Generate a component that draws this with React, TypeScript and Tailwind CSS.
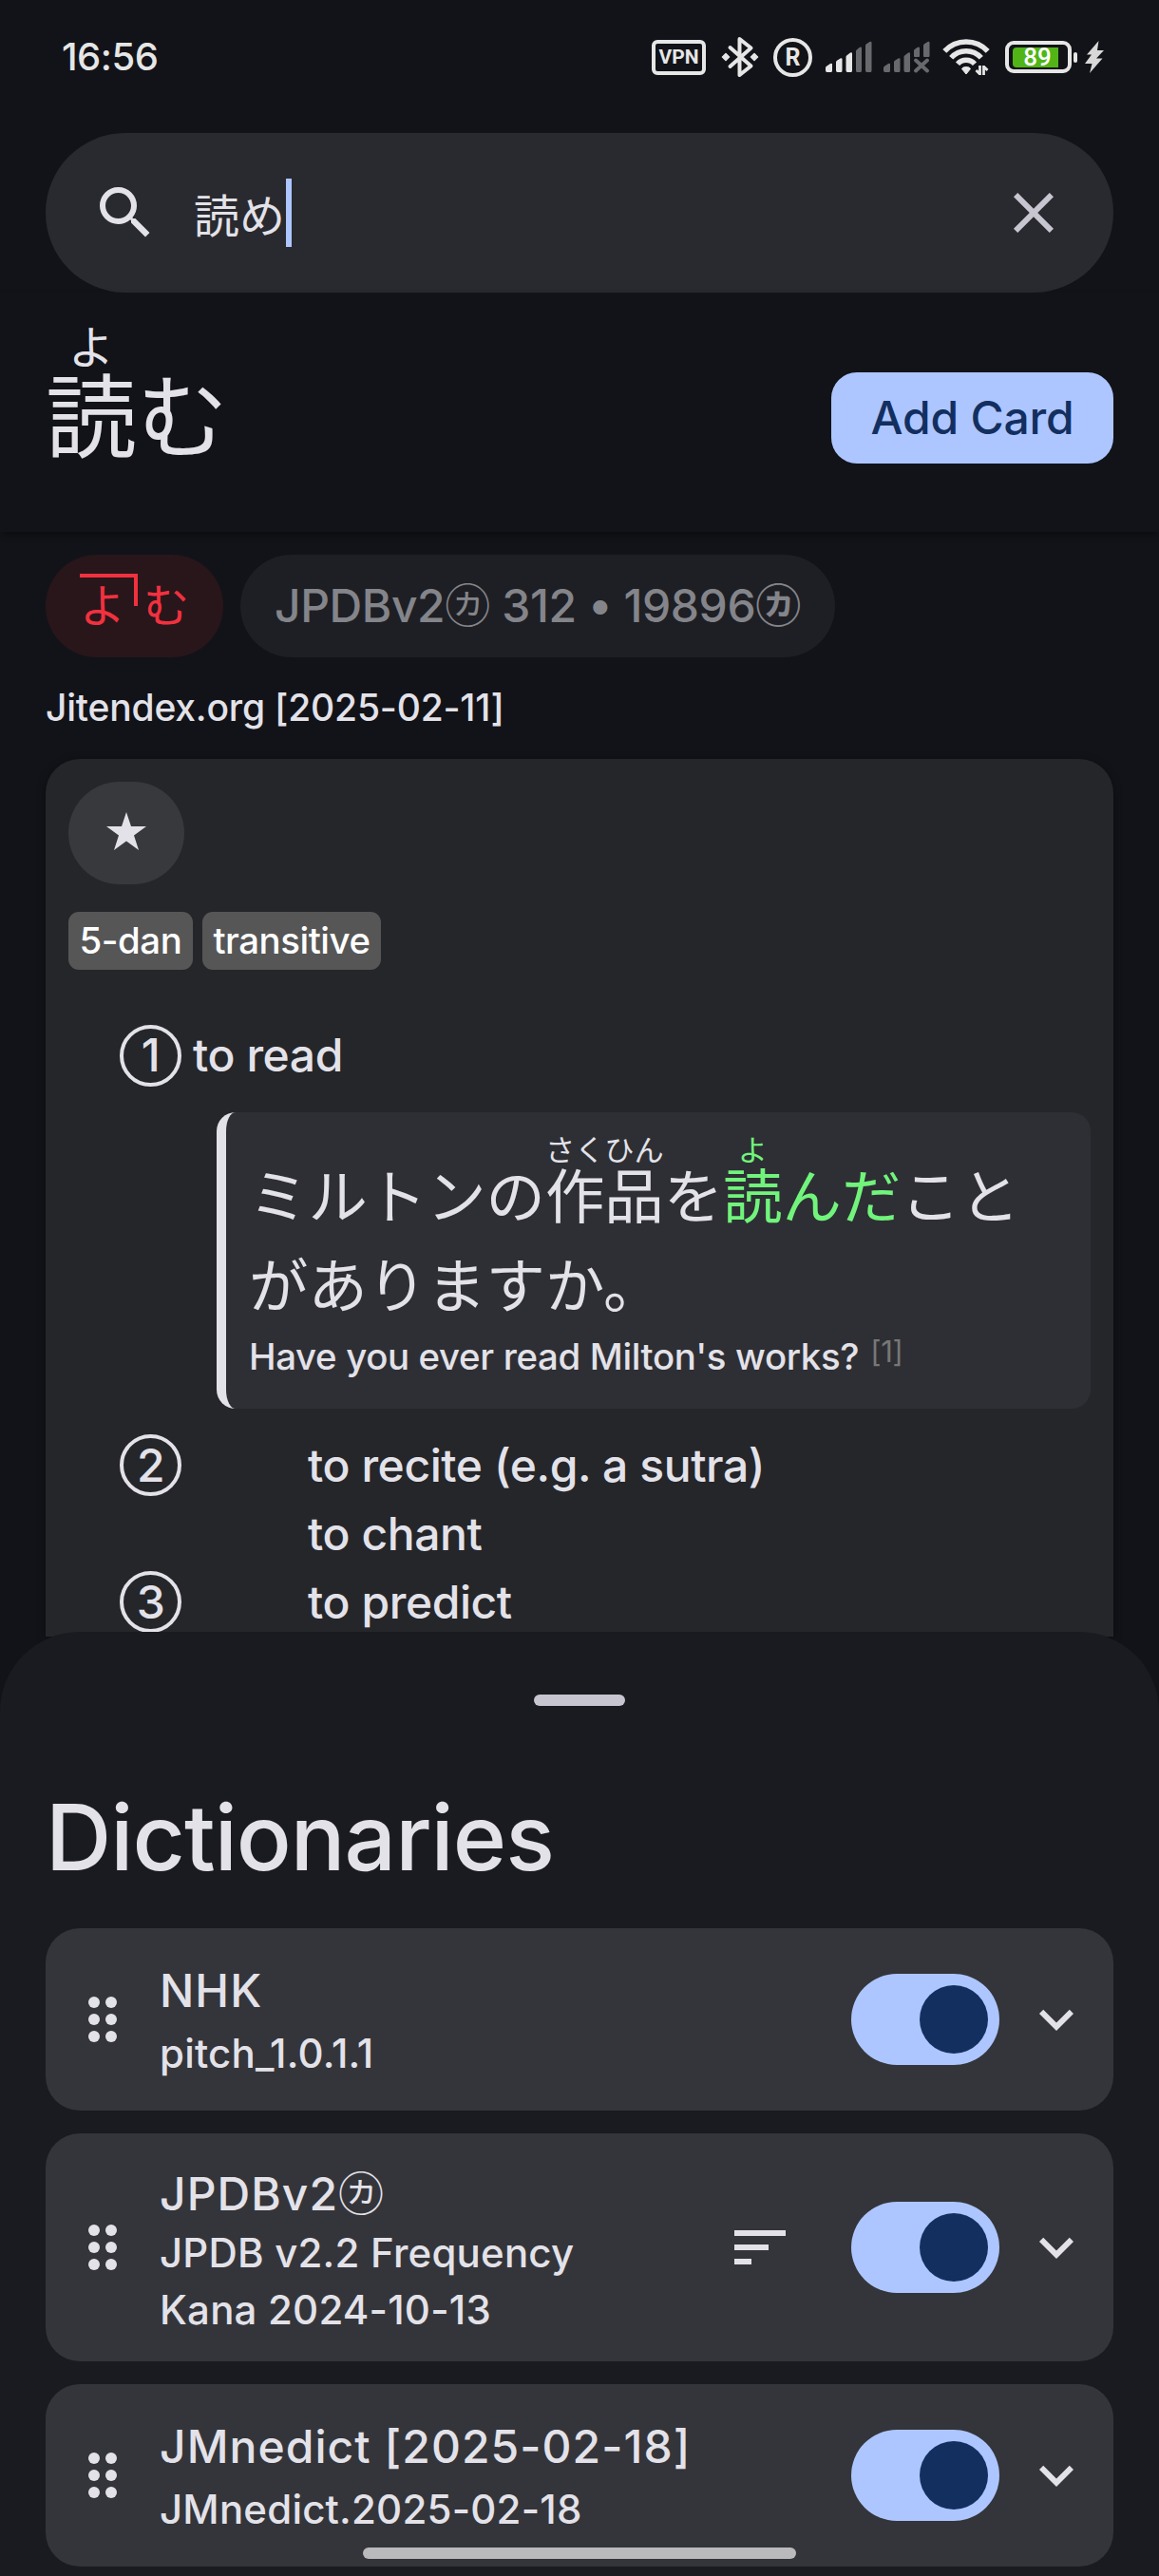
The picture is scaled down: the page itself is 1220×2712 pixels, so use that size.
import React from "react";

const FONT = "font-['Inter','Noto_Sans_CJK_JP',sans-serif]";

function Signal({ dim, crossed }: { dim?: boolean; crossed?: boolean }) {
  const lit = dim ? "#68696c" : "#e6e6e6";
  return (
    <svg width="49" height="34" viewBox="0 0 49 34" className="block">
      <path d="M0 31v-2.500q0-1 1-1.700l4-2.800q2-1 2 1V31q0 2-1 2H1.500Q0 33 0 31z" fill={lit} />
      <path d="M11 31V22.500q0-1 1-1.700l3.500-2.300q2-1 2 1V31q0 2-1 2h-4Q11 33 11 31z" fill={lit} />
      <path d="M21.500 31V17q0-1 1-1.700l3.500-2.800q2-1 2 1V31q0 2-1 2h-4q-1.500 0-1.500-2z" fill={lit} />
      {crossed ? (
        <>
          <path d="M32 16v-5.500q0-1 1-1.700l3-2q2-1 2 1V16q0 1-1 1h-4q-1 0-1-1zM42 16V5q0-1 1-1.700l3.500-2.300q2-1 2 1V16q0 1-1 1H43q-1 0-1-1z" fill="#68696c" />
          <path d="M34 20.500l12 11M46 20.500l-12 11" stroke="#68696c" strokeWidth="3.800" strokeLinecap="round" />
        </>
      ) : (
        <path d="M32 31V11q0-1 1-1.700l3-2.500q2-1 2 1V31q0 2-1 2h-4q-1 0-1-2zM42 31V5q0-1 1-1.700l3.500-2.300q2-1 2 1V31q0 2-1 2h-4q-1.500 0-1.500-2z" fill="#68696c" />
      )}
    </svg>
  );
}

function StatusBar() {
  return (
    <div className="flex h-[120px] shrink-0 items-center pl-[65px] pr-[58px] text-[#e6e6e6]">
      <div className="flex-1 text-[40px] font-medium leading-[48px] tracking-[-0.5px]">16:56</div>
      <div className="flex items-center font-['Roboto',sans-serif]">
        <div className="flex h-[37px] w-[57px] items-center justify-center rounded-[6px] border-[4.500px] border-[#e6e6e6] text-[21px] font-bold leading-none">
          VPN
        </div>
        <svg width="40" height="44" viewBox="0 0 40 44" className="ml-4" fill="none" stroke="#e6e6e6" strokeWidth="4" strokeLinejoin="round" strokeLinecap="round">
          <path d="M9.500 12l22 19.500L19.500 41V3l12 9.500L9.500 32" />
          <path d="M5 18.500l3.500 3.500L5 25.500 1.500 22zM35 18.500l3.500 3.500-3.500 3.500-3.500-3.500z" fill="#e6e6e6" strokeWidth="1.500" />
        </svg>
        <div className="ml-[15px] flex h-[41px] w-[41px] items-center justify-center rounded-full border-4 border-[#e6e6e6] text-[25px] font-bold leading-none">
          R
        </div>
        <div className="ml-[14px]"><Signal /></div>
        <div className="ml-3"><Signal dim crossed /></div>
        <svg width="50" height="42" viewBox="0 0 50 42" className="ml-[13px]" fill="none" stroke="#e6e6e6" strokeWidth="5.500">
          <path d="M2.300 14.800a31 31 0 0 1 45.400 0" />
          <path d="M9.200 21.800a21 21 0 0 1 31.600 0" />
          <path d="M16 28.300a12 12 0 0 1 18 0" />
          <path d="M25 31.500q4 0 4.500 2L25 39l-4.500-5.500q.5-2 4.500-2z" strokeWidth="1" fill="#e6e6e6" />
          <path d="M39.500 30v10M39.500 39l-4-4M43.500 40V30M43.500 31l4 4" strokeWidth="2.800" />
        </svg>
        <div className="ml-4 flex h-[34px] w-[70px] items-center rounded-[9px] border-4 border-[#e6e6e6] pl-[3.500px]">
          <div className="flex h-[21px] w-[48px] items-center justify-center rounded-l-[4px] bg-[#51b518] pl-[5px] text-[26px] font-medium leading-none text-white">89</div>
        </div>
        <div className="ml-[2px] h-[11px] w-[4px] rounded-[2px] bg-[#e6e6e6]" />
        <svg width="20" height="34" viewBox="0 0 20 34" className="ml-2" fill="#d8d8d8">
          <path d="M14.500 0L2 14.500h5L0 24h7.500L5 34l13.500-15.500H12L20 10h-7z" />
        </svg>
      </div>
    </div>
  );
}

function SearchBar() {
  return (
    <div className="mx-12 mt-5 flex h-[168px] shrink-0 items-center rounded-full bg-[#292a2f] px-12">
      <svg viewBox="0 0 24 24" className="h-[72px] w-[72px]" fill="#e3e2e9">
        <path d="M15.500 14h-.79l-.28-.27A6.471 6.471 0 0 0 16 9.500 6.500 6.500 0 1 0 9.500 16c1.610 0 3.090-.59 4.230-1.570l.27.28v.79l5 4.990L20.490 19l-4.990-5zm-6 0C7.010 14 5 11.990 5 9.500S7.010 5 9.500 5 14 7.010 14 9.500 11.990 14 9.500 14z" />
      </svg>
      <div className="ml-9 flex flex-1 items-center">
        <span className="pt-2 text-[48px] leading-[72px] text-[#e3e2e9]">読め</span>
        <span className="ml-px h-[72px] w-[6px] bg-[#adc6ff]" />
      </div>
      <svg viewBox="0 0 24 24" className="h-[72px] w-[72px]" fill="#c6c5d0">
        <path d="M19 6.410L17.590 5 12 10.590 6.410 5 5 6.410 10.590 12 5 17.590 6.410 19 12 13.410 17.590 19 19 17.590 13.410 12z" />
      </svg>
    </div>
  );
}

function Header() {
  return (
    <div className="flex h-[252px] shrink-0 items-start justify-between px-12 shadow-[0_4px_8px_-2px_rgba(0,0,0,0.45)]">
      <div className="flex pt-[34px] text-[#e3e2e9]">
        <div className="flex flex-col items-center">
          <span className="h-[49px] text-[48px] leading-[48px]">よ</span>
          <span className="text-[96px] leading-[96px]">読</span>
        </div>
        <span className="pt-[49px] text-[96px] leading-[96px]">む</span>
      </div>
      <button className="mt-[84px] h-24 w-[297px] rounded-[27px] bg-[#adc6ff] text-[48px] font-medium leading-[72px] tracking-[-0.2px] text-[#132f60]">
        Add Card
      </button>
    </div>
  );
}

function Chips() {
  return (
    <div className="flex gap-[18px] text-[48px] leading-[72px]">
      <div className="flex h-[108px] items-center rounded-full bg-[#28161b] px-9 text-[#f2313f]">
        <span className="mb-[34px] mr-[6px] h-[34px] border-r-4 border-t-4 border-[#f2313f] pr-[9px]">
          <span className="block leading-[60px]">よ</span>
        </span>
        <span className="leading-[72px]">む</span>
      </div>
      <div className="flex h-[108px] items-center whitespace-pre rounded-full bg-[#1e1f24] px-9 font-medium tracking-[-0.42px] text-[#84858a]">
        JPDBv2<span className="font-normal">㋕</span> 312 <span className="pb-[5px]">•</span> 19896<span className="font-bold">㋕</span>
      </div>
    </div>
  );
}

function Bullet({ n }: { n: string }) {
  return (
    <span className="flex h-[65px] w-[65px] shrink-0 items-center justify-center rounded-full border-[4.500px] border-[#e3e2e9] leading-none">
      {n}
    </span>
  );
}

function Stack({ base, ruby }: { base: string; ruby: string }) {
  return (
    <span className="relative">
      {base}
      <span className="absolute inset-x-0 top-[-28px] text-center text-[31.2px] leading-[32px]">{ruby}</span>
    </span>
  );
}

function Example() {
  return (
    <div className="ml-[156px] h-[312px] rounded-[20px] border-l-[10px] border-[#e3e2e9] bg-[#2e2f34] pl-6 pt-[43px]">
      <div className="h-[185px] whitespace-nowrap text-[62.4px] font-normal leading-[94px]">
        <div>
          ミルトンの<Stack base="作品" ruby="さくひん" />を
          <span className="text-[#71f47c]"><Stack base="読" ruby="よ" />んだ</span>こと
        </div>
        <div>がありますか。</div>
      </div>
      <div className="flex text-[38.4px] leading-[58px] tracking-[-0.35px]">
        Have you ever read Milton's works?
        <span className="ml-[12px] mt-[-5px] text-[31px] font-normal text-[#777777]">[1]</span>
      </div>
    </div>
  );
}

function Entry() {
  return (
    <div className="flex flex-col rounded-t-[36px] bg-[#25262a] px-6 pt-6 text-[48px] font-medium leading-[72px] tracking-[-0.42px] text-[#e3e2e9] shadow-[0_2px_10px_rgba(0,0,0,0.4)]">
      <div className="flex h-[108px] w-[122px] items-center justify-center rounded-[54px] bg-[#38393d] pb-[5px]">
        <svg width="42" height="40" viewBox="0 0 42 40" fill="#e3e2e9">
          <path d="M21 0l5 15h16L29 24.500 34 40 21 30.500 8 40l5-15.500L0 15h16z" />
        </svg>
      </div>
      <div className="mt-[29px] flex gap-[10px] text-[38.4px] leading-[61px] tracking-[-0.45px] text-white">
        <span className="rounded-[11px] bg-[#565656] px-[11.500px]">5-dan</span>
        <span className="rounded-[11px] bg-[#565656] px-[11.500px]">transitive</span>
      </div>
      <div className="ml-[54px] mt-[54px] flex h-[72px] items-center">
        <Bullet n="1" />
        <span className="ml-3">to read</span>
      </div>
      <div className="mt-6 tracking-normal"><Example /></div>
      <div className="ml-[54px] mt-[24px] flex h-[144px] items-start">
        <span className="mt-[3px]"><Bullet n="2" /></span>
        <div className="ml-[133px] flex flex-col">
          <span>to recite (e.g. a sutra)</span>
          <span>to chant</span>
        </div>
      </div>
      <div className="ml-[54px] flex h-[72px] items-start">
        <span className="mt-[3px]"><Bullet n="3" /></span>
        <span className="ml-[133px]">to predict</span>
      </div>
    </div>
  );
}

function Switch() {
  return (
    <span className="flex h-24 w-[156px] shrink-0 items-center justify-end rounded-full bg-[#adc6ff] pr-3">
      <span className="h-[72px] w-[72px] rounded-full bg-[#132f60]" />
    </span>
  );
}

type Dict = { name: React.ReactNode; lines: string[]; sort?: boolean };

function DictionaryCard({ name, lines, sort }: Dict) {
  return (
    <div className={`flex shrink-0 items-center rounded-[36px] bg-[#34353a] px-6 ${sort ? "h-60" : "h-48"}`}>
      <svg viewBox="0 0 24 24" className="h-[72px] w-[72px]" fill="#e3e2e9">
        {[6, 12, 18].map((y) => (
          <g key={y}>
            <circle cx="9" cy={y} r="2" />
            <circle cx="15" cy={y} r="2" />
          </g>
        ))}
      </svg>
      <div className="ml-6 flex flex-1 flex-col font-medium text-[#e3e2e9]">
        <span className={`h-[72px] text-[48px] leading-[72px] tracking-[1.05px] ${sort ? "pt-[4px]" : ""}`}>{name}</span>
        {lines.map((l) => (
          <span key={l} className="text-[42px] leading-[60px] tracking-[0.2px]">{l}</span>
        ))}
      </div>
      {sort && (
        <svg viewBox="0 0 24 24" className="mr-[60px] h-[72px] w-[72px]" fill="#e3e2e9">
          <path d="M3 18h6v-2H3v2zM3 6v2h18V6H3zm0 7h12v-2H3v2z" />
        </svg>
      )}
      <Switch />
      <svg viewBox="0 0 24 24" className="ml-6 h-[72px] w-[72px]" fill="#e3e2e9">
        <path d="M16.590 8.590L12 13.170 7.410 8.590 6 10l6 6 6-6z" />
      </svg>
    </div>
  );
}

const DICTS: Dict[] = [
  { name: "NHK", lines: ["pitch_1.0.1.1"] },
  { name: <>JPDBv2<span className="font-normal">㋕</span></>, lines: ["JPDB v2.2 Frequency", "Kana 2024-10-13"], sort: true },
  { name: "JMnedict [2025-02-18]", lines: ["JMnedict.2025-02-18"] },
];

function Sheet() {
  return (
    <div className="absolute inset-x-0 bottom-0 flex h-[994px] flex-col rounded-t-[84px] bg-[#1a1b20] px-12">
      <div className="mt-[66px] h-3 w-24 shrink-0 self-center rounded-full bg-[#c6c5d0]" />
      <h1 className="mt-20 h-[116px] text-[96px] font-medium leading-[116px] tracking-[-0.98px] text-[#e3e2e9]">Dictionaries</h1>
      <div className="mt-[38px] flex flex-col gap-6">
        {DICTS.map((d, i) => (
          <DictionaryCard key={i} {...d} />
        ))}
      </div>
      <div className="absolute bottom-[18px] left-[382px] h-3 w-[456px] rounded-full bg-[#bababc]" />
    </div>
  );
}

export default function App() {
  return (
    <div lang="ja" className={`relative flex h-[2712px] w-[1220px] flex-col overflow-hidden bg-[#121318] ${FONT}`}>
      <StatusBar />
      <SearchBar />
      <Header />
      <div className="flex flex-col px-12 pt-6">
        <Chips />
        <div className="mt-6 h-[83px] text-[39px] font-medium leading-[58px] tracking-[-0.2px] text-[#e3e2e9]">Jitendex.org [2025-02-11]</div>
        <Entry />
      </div>
      <Sheet />
    </div>
  );
}
